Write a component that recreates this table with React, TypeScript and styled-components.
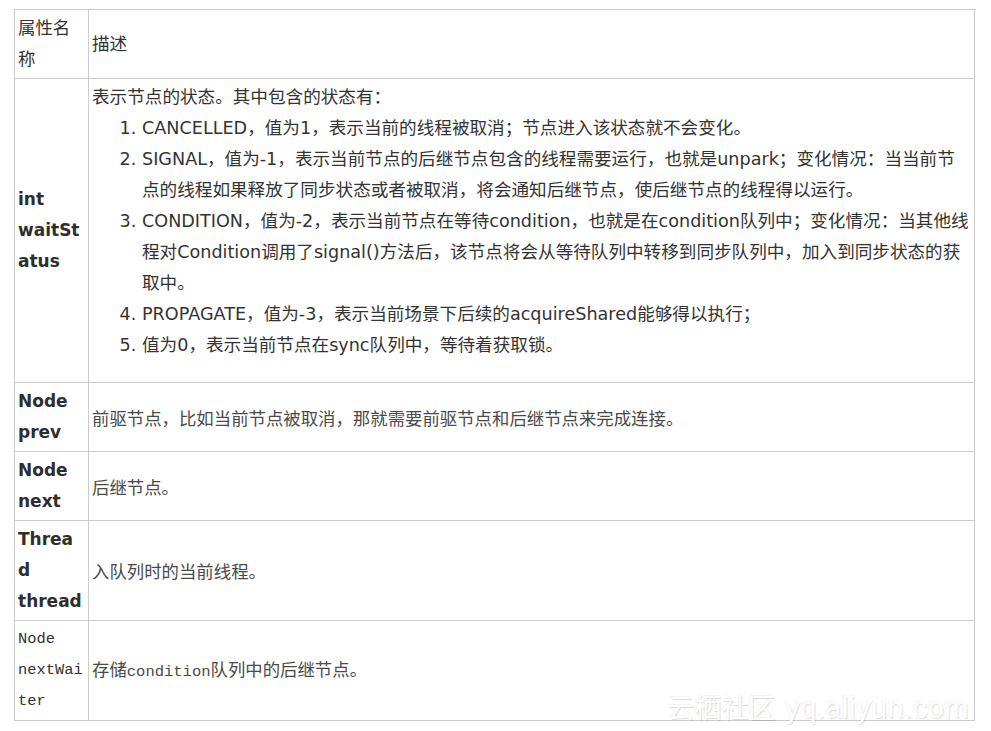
import React from 'react';
import styled, { createGlobalStyle } from 'styled-components';

const GlobalStyle = createGlobalStyle`
  html, body {
    margin: 0;
    padding: 0;
    background: #fff;
  }
`;

const Page = styled.div`
  position: relative;
  padding: 9px 0 10px 14px;
  color: #333;
  font-family: "DejaVu Sans", "Noto Sans CJK SC", sans-serif;
  font-size: 17px;
  line-height: 31px;
`;

const Table = styled.div`
  display: grid;
  grid-template-columns: 74px 886px;
  width: 961px;
  border-top: 1px solid #ccc;
  border-left: 1px solid #ccc;
`;

const NameCell = styled.div<{ variant?: 'plain' | 'bold' | 'mono' }>`
  display: flex;
  flex-direction: column;
  justify-content: center;
  padding: 3px 4px 3px 3px;
  border-right: 1px solid #ccc;
  border-bottom: 1px solid #ccc;
  overflow-wrap: break-word;
  word-wrap: break-word;
  min-width: 0;
  font-family: ${p =>
    p.variant === 'mono'
      ? '"Liberation Mono", "Noto Sans CJK SC", monospace'
      : '"DejaVu Sans", "Noto Sans CJK SC", sans-serif'};
  font-size: ${p => (p.variant === 'mono' ? '15.4px' : p.variant === 'bold' ? '17px' : '17.4px')};
  font-weight: ${p => (p.variant === 'bold' ? 700 : 400)};
  color: ${p => (p.variant === 'bold' ? '#2e2e2e' : '#333')};
`;

const DescCell = styled.div<{ light?: boolean }>`
  display: flex;
  flex-direction: column;
  justify-content: center;
  padding: 3px;
  border-right: 1px solid #ccc;
  border-bottom: 1px solid #ccc;
  min-width: 0;
  color: ${p => (p.light ? '#4a4a4a' : '#333')};
  font-size: ${p => (p.light ? '17.4px' : '17.6px')};
  font-family: ${p =>
    p.light
      ? '"Noto Sans CJK SC", sans-serif'
      : '"DejaVu Sans", "Noto Sans CJK SC", sans-serif'};
`;

const Intro = styled.div``;

const StateList = styled.ol`
  margin: 0 0 18px;
  padding: 0 0 0 50px;

  li {
    padding: 0;
  }
`;

const Code = styled.span`
  font-family: "Liberation Mono", monospace;
  font-size: 15.5px;
`;

const Watermark = styled.div`
  position: absolute;
  right: 22px;
  bottom: 8px;
  display: flex;
  align-items: baseline;
  gap: 10px;
  color: #fff;
  text-shadow: 1px 1px 1px rgba(0, 0, 0, 0.14), -1px -1px 1px rgba(0, 0, 0, 0.05);
  font-family: "Noto Sans CJK SC", sans-serif;
  font-size: 27px;
  line-height: 30px;
  pointer-events: none;
`;

const WatermarkUrl = styled.span`
  font-family: "Liberation Sans", sans-serif;
  font-size: 29px;
  letter-spacing: 0.5px;
`;

const states = [
  'CANCELLED，值为1，表示当前的线程被取消；节点进入该状态就不会变化。',
  'SIGNAL，值为-1，表示当前节点的后继节点包含的线程需要运行，也就是unpark；变化情况：当当前节点的线程如果释放了同步状态或者被取消，将会通知后继节点，使后继节点的线程得以运行。',
  'CONDITION，值为-2，表示当前节点在等待condition，也就是在condition队列中；变化情况：当其他线程对Condition调用了signal()方法后，该节点将会从等待队列中转移到同步队列中，加入到同步状态的获取中。',
  'PROPAGATE，值为-3，表示当前场景下后续的acquireShared能够得以执行；',
  '值为0，表示当前节点在sync队列中，等待着获取锁。',
];

const App: React.FC = () => {
  return (
    <>
      <GlobalStyle />
      <Page>
        <Table>
          <NameCell>属性名称</NameCell>
          <DescCell>描述</DescCell>

          <NameCell variant="bold">int waitStatus</NameCell>
          <DescCell>
            <Intro>表示节点的状态。其中包含的状态有：</Intro>
            <StateList>
              {states.map(s => (
                <li key={s}>{s}</li>
              ))}
            </StateList>
          </DescCell>

          <NameCell variant="bold">Node prev</NameCell>
          <DescCell light>前驱节点，比如当前节点被取消，那就需要前驱节点和后继节点来完成连接。</DescCell>

          <NameCell variant="bold">Node next</NameCell>
          <DescCell light>后继节点。</DescCell>

          <NameCell variant="bold">Thread thread</NameCell>
          <DescCell light>入队列时的当前线程。</DescCell>

          <NameCell variant="mono">Node nextWaiter</NameCell>
          <DescCell light>
            <span>
              存储<Code>condition</Code>队列中的后继节点。
            </span>
          </DescCell>
        </Table>
        <Watermark>
          <span>云栖社区</span>
          <WatermarkUrl>yq.aliyun.com</WatermarkUrl>
        </Watermark>
      </Page>
    </>
  );
};

export default App;
